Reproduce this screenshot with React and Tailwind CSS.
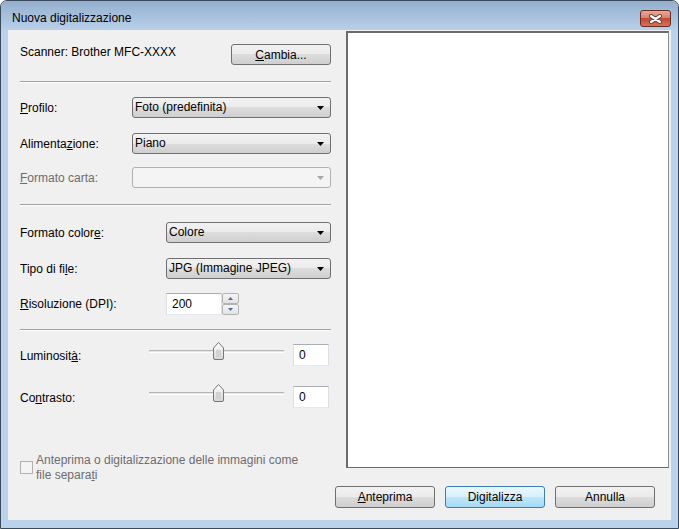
import React from 'react';

const combo =
  'bg-[linear-gradient(#f2f2f2,#ebebeb_50%,#dddddd_50%,#cfcfcf)] border border-[#707070] rounded-[3px]';

function Arrow({ color = '#000' }) {
  return (
    <svg width="7" height="4" viewBox="0 0 7 4" className="shrink-0">
      <path d="M0 0 H7 L3.5 4 Z" fill={color} />
    </svg>
  );
}

function Combo({ value, width, disabled }) {
  return (
    <div
      className={
        'h-[21px] flex items-center justify-between pl-[2px] pr-[6px] ' +
        (disabled
          ? 'bg-[#f4f4f4] border border-[#adb2b5] rounded-[3px]'
          : combo)
      }
      style={{ width }}
    >
      <span className="-mt-[2px]">{value}</span>
      <Arrow color={disabled ? '#a8a8a8' : '#000'} />
    </div>
  );
}

function Row({ label, children, labelWidth, disabled, className = '' }) {
  return (
    <div className={'flex items-center ' + className}>
      <div
        className={disabled ? 'text-[#6d6d6d]' : 'text-black'}
        style={{ width: labelWidth }}
      >
        {label}
      </div>
      {children}
    </div>
  );
}

function Sep({ className = '' }) {
  return (
    <div
      className={
        'h-[2px] w-[311px] border-t border-[#a0a0a0] border-b border-b-white ' +
        className
      }
    />
  );
}

function Edit({ value, className = '' }) {
  return (
    <div
      className={
        'h-[22px] bg-white border border-[#dbdfe6] border-t-[#abadb3] border-b-[#e3e9ef] flex items-center pl-[5px] ' +
        className
      }
    >
      {value}
    </div>
  );
}

function Thumb() {
  return (
    <svg width="11" height="18" viewBox="0 0 11 18" className="absolute left-[64px] top-0">
      <defs>
        <linearGradient id="tg" x1="0" x2="0" y1="0" y2="1">
          <stop offset="0" stopColor="#ffffff" />
          <stop offset="1" stopColor="#d6d6d6" />
        </linearGradient>
      </defs>
      <path
        d="M0.5 6 L5.5 0.5 L10.5 6 V16 Q10.5 17.5 9 17.5 H2 Q0.5 17.5 0.5 16 Z"
        fill="url(#tg)"
        stroke="#777"
      />
      <rect x="3" y="8" width="5" height="7" fill="#d2d2d2" />
    </svg>
  );
}

function SliderRow({ label }) {
  return (
    <div className="flex items-start h-[24px]">
      <div className="w-[129px] mt-[6px]">{label}</div>
      <div className="relative w-[135px] h-[18px]">
        <div className="absolute left-0 right-0 top-[8px] h-[3px] border-t border-[#b5b5b5] bg-[#e4e6e8] border-b border-b-white" />
        <Thumb />
      </div>
      <Edit value="0" className="w-[36px] ml-[9px] mt-[2px]" />
    </div>
  );
}

function SpinBtn({ up }) {
  return (
    <div className="h-[11px] w-[17px] border border-[#b3b3b3] rounded-[2px] bg-[linear-gradient(#f6f6f6,#e2e2e2)] flex items-center justify-center">
      <svg width="5" height="3" viewBox="0 0 5 3">
        <path d={up ? 'M0 3 L2.5 0 L5 3 Z' : 'M0 0 L5 0 L2.5 3 Z'} fill="#4b6b9a" />
      </svg>
    </div>
  );
}

function Button({ children, primary }) {
  return (
    <div
      className={
        'w-[100px] h-[22px] flex items-center justify-center rounded-[3px] border ' +
        (primary
          ? 'border-[#3c7fb1] bg-[linear-gradient(#eaf6fd,#d9f0fc_50%,#bee6fd_50%,#a7d9f5)]'
          : 'border-[#707070] bg-[linear-gradient(#f2f2f2,#ebebeb_50%,#dddddd_50%,#cfcfcf)]')
      }
    >
      {children}
    </div>
  );
}

export default function App() {
  return (
    <div className="w-[679px] h-[529px] border border-[#3a4a5c] rounded-t-[7px] bg-[#bbd2eb] flex flex-col overflow-hidden font-['Liberation_Sans',Arial,sans-serif] text-[12px] leading-[16px] text-black">
      <div className="h-[29px] shrink-0 flex items-start justify-between bg-[linear-gradient(#94afce,#b9d0e9)]">
        <div className="ml-[11px] mt-[9px]">Nuova digitalizzazione</div>
        <div className="mt-[9px] mr-[7px] w-[31px] h-[17px] rounded-[3px] border border-[#6c2b20] bg-[linear-gradient(#e9a99a,#d68572_45%,#c24a30_50%,#d3745a)] flex items-center justify-center">
          <svg width="15" height="10" viewBox="0 0 15 10">
            <path d="M3 2 L12 8 M12 2 L3 8" stroke="#5c3a34" strokeWidth="4" strokeLinecap="round" />
            <path d="M3 2 L12 8 M12 2 L3 8" stroke="#ffffff" strokeWidth="2.2" strokeLinecap="round" />
          </svg>
        </div>
      </div>

      <div className="mx-[7px] h-[490px] bg-[#f0f0f0] flex">
        <div className="w-[327px] pl-[12px] flex flex-col">
          <div className="mt-[14px] h-[20px] flex items-start justify-between w-[311px]">
            <span>Scanner: Brother MFC-XXXX</span>
            <div className={combo + ' w-[100px] h-[21px] flex items-center justify-center'}>
              <span>
                <span className="underline">C</span>ambia...
              </span>
            </div>
          </div>

          <Sep className="mt-[17px]" />

          <Row
            className="mt-[14px]"
            labelWidth={112}
            label={<><span className="underline">P</span>rofilo:</>}
          >
            <Combo value="Foto (predefinita)" width={199} />
          </Row>
          <Row
            className="mt-[15px]"
            labelWidth={112}
            label={<>Alimenta<span className="underline">z</span>ione:</>}
          >
            <Combo value="Piano" width={199} />
          </Row>
          <Row
            className="mt-[13px]"
            labelWidth={112}
            disabled
            label={<><span className="underline">F</span>ormato carta:</>}
          >
            <Combo value="" width={199} disabled />
          </Row>

          <Sep className="mt-[16px]" />

          <Row
            className="mt-[16px]"
            labelWidth={146}
            label={<>Formato color<span className="underline">e</span>:</>}
          >
            <Combo value="Colore" width={165} />
          </Row>
          <Row
            className="mt-[15px]"
            labelWidth={146}
            label={<>Tipo di fi<span className="underline">l</span>e:</>}
          >
            <Combo value="JPG (Immagine JPEG)" width={165} />
          </Row>
          <Row
            className="mt-[14px]"
            labelWidth={146}
            label={<><span className="underline">R</span>isoluzione (DPI):</>}
          >
            <div className="flex items-center">
              <Edit value="200" className="w-[56px]" />
              <div className="flex flex-col">
                <SpinBtn up />
                <SpinBtn />
              </div>
            </div>
          </Row>

          <Sep className="mt-[14px]" />

          <div className="mt-[11px]">
            <SliderRow label={<>Luminosit<span className="underline">à</span>:</>} />
          </div>
          <div className="mt-[18px]">
            <SliderRow label={<>Co<span className="underline">n</span>trasto:</>} />
          </div>

          <div className="mt-[45px] flex items-start text-[#6d6d6d] leading-[15px]">
            <div className="mt-[8px] w-[13px] h-[13px] border border-[#b1b1b1] bg-[#f4f4f4] shrink-0" />
            <div className="ml-[3px] w-[280px]">
              Anteprima o digitalizzazione delle immagini come file separa
              <span className="underline">t</span>i
            </div>
          </div>
        </div>

        <div className="flex-1 flex flex-col">
          <div className="ml-[11px] mr-[2px] mt-[1px] h-[437px] bg-white border-t-2 border-l-2 border-r border-b border-[#6b6b6b] border-r-[#8d8d8d]" />
          <div className="mt-[18px] flex gap-[10px]">
            <Button>
              <span>
                <span className="underline">A</span>nteprima
              </span>
            </Button>
            <Button primary>Digitalizza</Button>
            <Button>Annulla</Button>
          </div>
        </div>
      </div>
    </div>
  );
}
